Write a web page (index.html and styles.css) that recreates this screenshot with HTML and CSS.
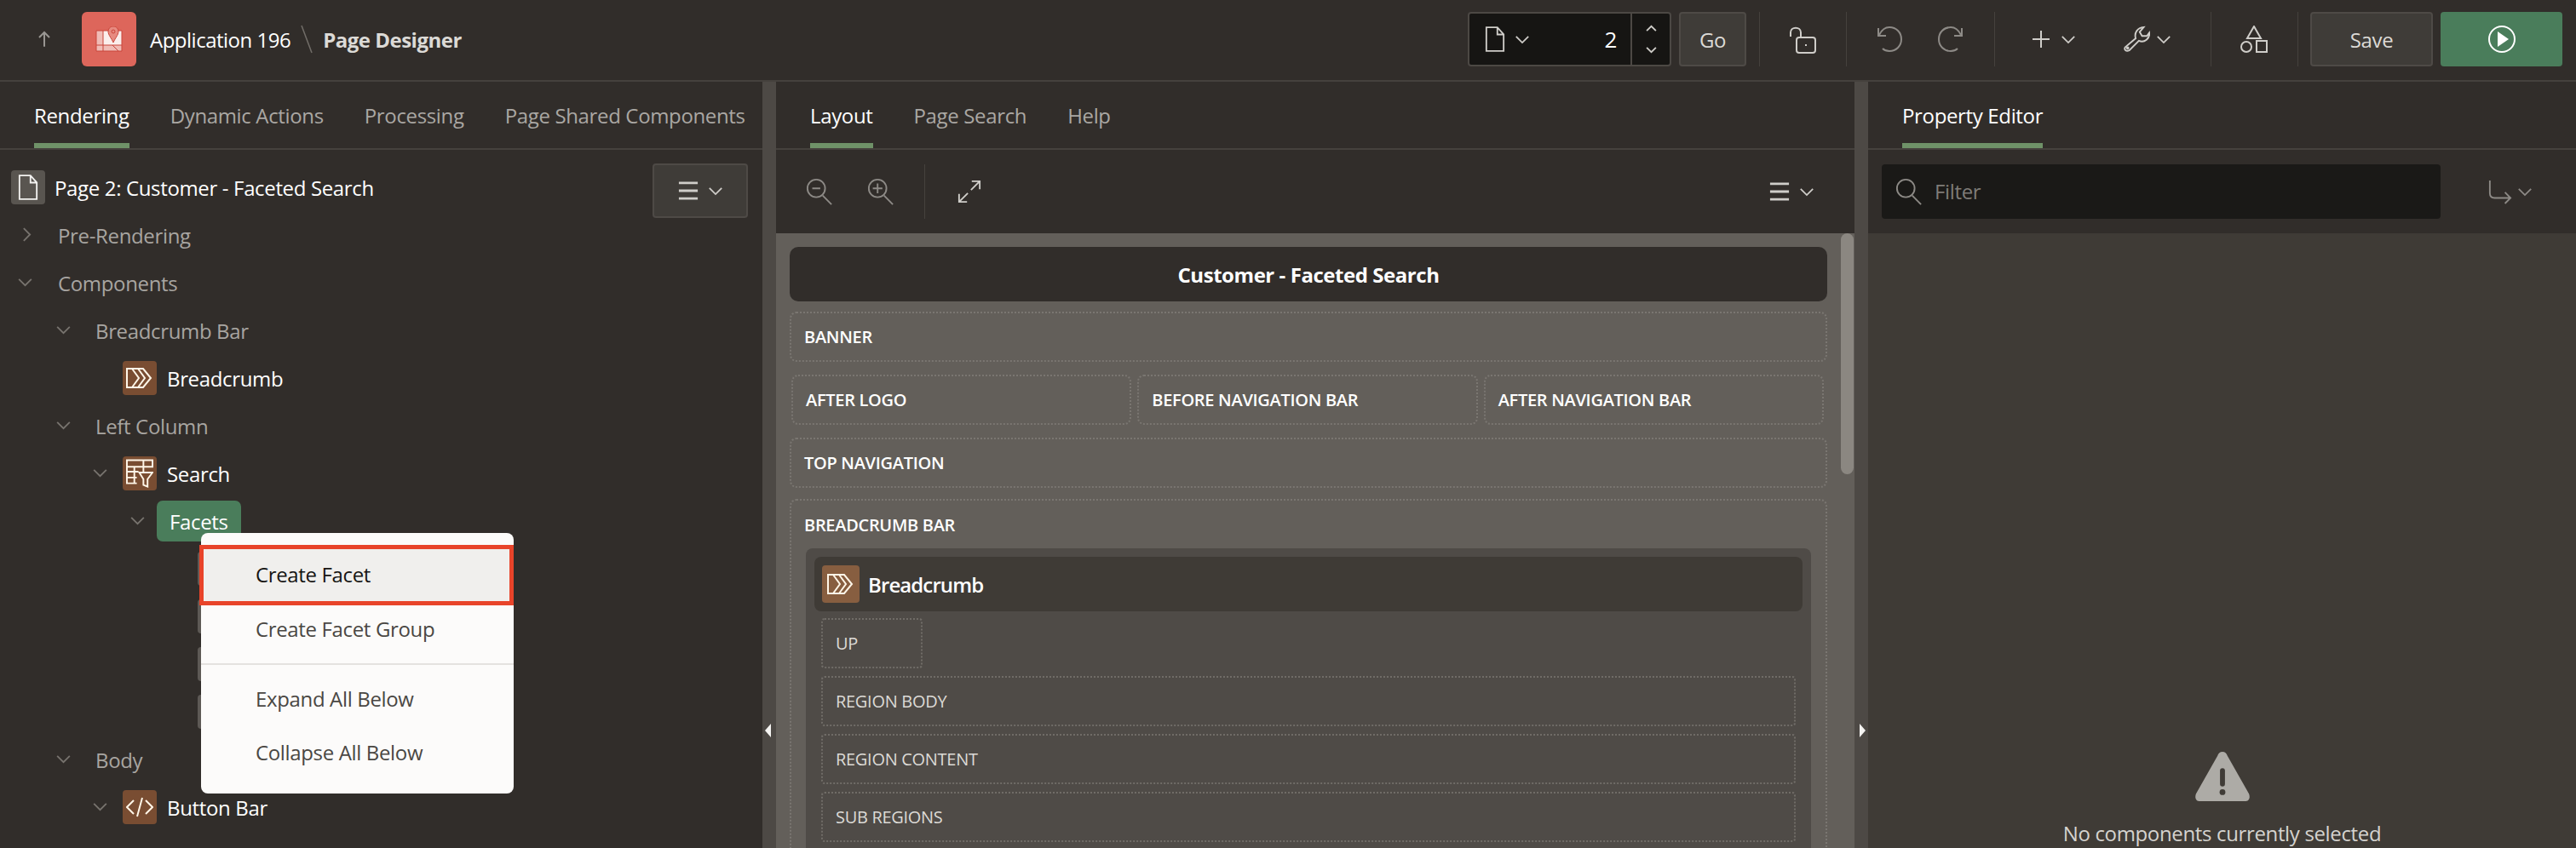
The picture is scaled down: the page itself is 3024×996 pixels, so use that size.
FILE: index.html
```html
<!DOCTYPE html>
<html lang="en">
<head>
    <meta charset="UTF-8">
    <title>Page Designer</title>
    <link rel="stylesheet" href="styles.css">
</head>
<body>
    <header class="topbar">
        <div class="brand">
            <svg class="ico up" viewBox="0 0 24 32"><path d="M12 29V4M3 13l9-9 9 9"/></svg>
            <div class="logo">
                <svg viewBox="0 0 32 30"><path class="f1" d="M1 5h8v17H1z"/><path class="f2" d="M9 5h22v17H9z"/><path class="f1" d="M1 22h30v7H1z"/><path class="ln" d="M1 5h30v24H1zM9 5v24M1 22h30M20 22l7 7"/><path class="pin" d="M21 0c4 0 6 3 6 6 0 4-4 8-6 13-2-5-6-9-6-13 0-3 2-6 6-6z"/><circle class="ln" cx="21" cy="6" r="2"/></svg>
            </div>
            <span class="app-name">Application 196</span>
            <svg class="slash" viewBox="0 0 14 34"><path d="M1 1l12 32"/></svg>
            <span class="page-name">Page Designer</span>
        </div>
        <div class="tools">
            <div class="page-picker">
                <svg class="ico page" viewBox="0 0 26 34"><path d="M2 2h14l8 9v21H2zM16 2v9h8"/></svg>
                <svg class="ico chev" viewBox="0 0 20 12"><path d="M2 2l8 8 8-8"/></svg>
                <span class="page-num">2</span>
                <div class="stepper">
                    <svg class="ico" viewBox="0 0 16 10"><path d="M2 8l6-6 6 6"/></svg>
                    <svg class="ico" viewBox="0 0 16 10"><path d="M2 2l6 6 6-6"/></svg>
                </div>
            </div>
            <button class="btn go">Go</button>
            <span class="sep sep-a"></span>
            <svg class="ico lock" viewBox="0 0 32 32"><path d="M2 12V7c0-7 12-7 12 0v6"/><rect x="9" y="13" width="22" height="18" rx="3"/><path d="M20 21v2"/></svg>
            <span class="sep sep-b"></span>
            <svg class="ico dim undo" viewBox="0 0 31 32"><path d="M2 3v9h9M3 11C6 5 11 2 15 2c8 0 14 6 14 14s-6 14-14 14c-3 0-6-1-8-3"/></svg>
            <svg class="ico dim redo" viewBox="0 0 31 32"><path d="M29 3v9h-9M28 11C25 5 20 2 16 2 8 2 2 8 2 16s6 14 14 14c3 0 6-1 8-3"/></svg>
            <span class="sep sep-c"></span>
            <svg class="ico plus" viewBox="0 0 20 20"><path d="M10 0v20M0 10h20"/></svg>
            <svg class="ico chev" viewBox="0 0 20 12"><path d="M2 2l8 8 8-8"/></svg>
            <svg class="ico wrench" viewBox="0 0 33 32"><path d="M2 26l13-11c-2-7 2-13 10-14l-5 6 3 5 6 0 3-4c1 7-6 13-13 10L7 30c-4 2-7-1-5-4z"/><circle cx="5" cy="27" r="1"/></svg>
            <svg class="ico chev" viewBox="0 0 20 12"><path d="M2 2l8 8 8-8"/></svg>
            <span class="sep sep-d"></span>
            <svg class="ico shapes" viewBox="0 0 32 32"><path d="M16 1l8 14H8zM19 18h12v13H19z"/><circle cx="7" cy="25" r="6"/></svg>
            <span class="sep sep-e"></span>
            <button class="btn save">Save</button>
            <button class="run">
                <svg viewBox="0 0 34 34"><circle cx="17" cy="17" r="15"/><path class="play" d="M12 8l13 9-13 9z"/></svg>
            </button>
        </div>
    </header>

    <main class="designer">
        <section class="panel left">
            <nav class="tabs">
                <a class="tab on">Rendering</a>
                <a class="tab">Dynamic Actions</a>
                <a class="tab">Processing</a>
                <a class="tab">Page Shared Components</a>
            </nav>
            <div class="tree-head">
                <span class="page-badge"><svg class="ico" viewBox="0 0 26 34"><path d="M2 2h14l8 9v21H2zM16 2v9h8"/></svg></span>
                <span class="tree-title">Page 2: Customer - Faceted Search</span>
                <button class="btn menu-btn">
                    <svg class="ico bars" viewBox="0 0 26 26"><path d="M1 3h24M1 13h24M1 23h24"/></svg>
                    <svg class="ico chev" viewBox="0 0 20 12"><path d="M2 2l8 8 8-8"/></svg>
                </button>
            </div>
            <ul class="tree">
                <li class="node l0"><svg class="tw side" viewBox="0 0 12 20"><path d="M2 2l8 8-8 8"/></svg><span class="muted">Pre-Rendering</span></li>
                <li class="node l0"><svg class="tw" viewBox="0 0 20 12"><path d="M2 2l8 8 8-8"/></svg><span class="muted">Components</span></li>
                <li class="node l1"><svg class="tw" viewBox="0 0 20 12"><path d="M2 2l8 8 8-8"/></svg><span class="muted">Breadcrumb Bar</span></li>
                <li class="node l2"><span class="comp"><svg viewBox="0 0 32 26"><path d="M1 2h19l9 11-9 11H1zM7 2l8 11-8 11M14 2l8 11-8 11"/></svg></span><span>Breadcrumb</span></li>
                <li class="node l1"><svg class="tw" viewBox="0 0 20 12"><path d="M2 2l8 8 8-8"/></svg><span class="muted">Left Column</span></li>
                <li class="node l2"><svg class="tw" viewBox="0 0 20 12"><path d="M2 2l8 8 8-8"/></svg><span class="comp"><svg class="tall" viewBox="0 0 33 34"><path d="M1 1h31v8H1zM1 9v20h12M1 15h14M1 22h12M10 9v20M21 1v8M21 9v6M16 16h16l-6 8v9l-5-2v-7z"/></svg></span><span>Search</span></li>
                <li class="node l3"><svg class="tw" viewBox="0 0 20 12"><path d="M2 2l8 8 8-8"/></svg><span class="pill">Facets</span></li>
                <li class="node l4"><span class="comp grey"></span></li>
                <li class="node l4"><span class="comp grey"></span></li>
                <li class="node l4"><span class="comp grey"></span></li>
                <li class="node l4"><span class="comp grey"></span></li>
                <li class="node l1"><svg class="tw" viewBox="0 0 20 12"><path d="M2 2l8 8 8-8"/></svg><span class="muted">Body</span></li>
                <li class="node l2"><svg class="tw" viewBox="0 0 20 12"><path d="M2 2l8 8 8-8"/></svg><span class="comp"><svg viewBox="0 0 32 26"><path d="M9 5l-8 8 8 8M23 5l8 8-8 8M19 2l-6 22"/></svg></span><span>Button Bar</span></li>
                <li class="node l3b"><span class="muted">Next</span></li>
            </ul>
            <div class="ctx-menu">
                <div class="ctx-item hot">Create Facet</div>
                <div class="ctx-item">Create Facet Group</div>
                <hr class="ctx-sep">
                <div class="ctx-item">Expand All Below</div>
                <div class="ctx-item">Collapse All Below</div>
            </div>
        </section>

        <div class="splitter"><span class="grip to-left"></span></div>

        <section class="panel center">
            <nav class="tabs">
                <a class="tab on">Layout</a>
                <a class="tab">Page Search</a>
                <a class="tab">Help</a>
            </nav>
            <div class="layout-tools">
                <svg class="ico dim lens" viewBox="0 0 34 34"><circle cx="13" cy="13" r="11"/><path d="M21 22l11 11M8 13h10"/></svg>
                <svg class="ico dim lens" viewBox="0 0 34 34"><circle cx="13" cy="13" r="11"/><path d="M21 22l11 11M7 13h12M13 7v12"/></svg>
                <span class="sep"></span>
                <svg class="ico grow" viewBox="0 0 30 30"><path d="M18 2h10v10M28 2L17 13M12 28H2V18M2 28l11-11"/></svg>
                <button class="layout-menu">
                    <svg class="ico bars" viewBox="0 0 26 26"><path d="M1 3h24M1 13h24M1 23h24"/></svg>
                    <svg class="ico chev" viewBox="0 0 20 12"><path d="M2 2l8 8 8-8"/></svg>
                </button>
            </div>
            <div class="canvas">
                <div class="canvas-inner">
                    <div class="page-title">Customer - Faceted Search</div>
                    <div class="slot">BANNER</div>
                    <div class="slot-row">
                        <div class="slot">AFTER LOGO</div>
                        <div class="slot">BEFORE NAVIGATION BAR</div>
                        <div class="slot">AFTER NAVIGATION BAR</div>
                    </div>
                    <div class="slot">TOP NAVIGATION</div>
                    <div class="slot tall">
                        <div class="slot-label">BREADCRUMB BAR</div>
                        <div class="region">
                            <div class="region-head">
                                <span class="comp big"><svg viewBox="0 0 32 26"><path d="M1 2h19l9 11-9 11H1zM7 2l8 11-8 11M14 2l8 11-8 11"/></svg></span>
                                <span>Breadcrumb</span>
                            </div>
                            <div class="sub short">UP</div>
                            <div class="sub">REGION BODY</div>
                            <div class="sub">REGION CONTENT</div>
                            <div class="sub">SUB REGIONS</div>
                        </div>
                    </div>
                </div>
                <span class="scroll-thumb"></span>
            </div>
        </section>

        <div class="splitter"><span class="grip to-right"></span></div>

        <section class="panel right">
            <nav class="tabs">
                <a class="tab on">Property Editor</a>
            </nav>
            <div class="filter-bar">
                <div class="filter">
                    <svg class="ico dim" viewBox="0 0 34 34"><circle cx="13" cy="13" r="11"/><path d="M21 22l11 11"/></svg>
                    <span class="filter-text">Filter</span>
                </div>
                <svg class="ico dim go-to" viewBox="0 0 30 30"><path d="M2 1v16c0 4 2 6 6 6h20M21 16l7 7-7 7"/></svg>
                <svg class="ico dim chev" viewBox="0 0 20 12"><path d="M2 2l8 8 8-8"/></svg>
            </div>
            <div class="prop-body">
                <svg class="warn" viewBox="0 0 66 60"><path d="M33 0c3 0 5 2 6 5l26 46c2 5 0 9-5 9H6c-5 0-7-4-5-9L27 5c1-3 3-5 6-5z"/><rect class="cut" x="30" y="20" width="6" height="22" rx="3"/><circle class="cut" cx="33" cy="49" r="3.500"/></svg>
                <p>No components currently selected</p>
            </div>
        </section>
    </main>
</body>
</html>
```

FILE: styles.css
```css
* {
    box-sizing: border-box;
}
html, body {
    height: 100%;
}
body {
    margin: 0;
    height: 996px;
    overflow: hidden;
    background: #312d2a;
    color: #fff;
    font-family: "Open Sans", "Noto Sans", sans-serif;
    font-size: 24px;
    letter-spacing: -0.35px;
    display: flex;
    flex-direction: column;
}
button {
    font-family: inherit;
    letter-spacing: inherit;
}
.ico {
    fill: none;
    stroke: #cfcdc9;
    stroke-width: 2;
    flex: none;
}
.ico.dim {
    stroke: #8d8a86;
}
.chev {
    width: 18px;
    height: 11px;
}

/* top bar */
.topbar {
    height: 96px;
    flex: none;
    display: flex;
    justify-content: space-between;
    align-items: flex-start;
    padding-top: 14px;
    background: #312d2a;
    border-bottom: 2px solid #45413d;
}
.brand {
    display: flex;
    align-items: center;
    height: 64px;
    padding-left: 44px;
}
.up {
    width: 16px;
    height: 24px;
    stroke: #999692;
    stroke-width: 3;
}
.logo {
    width: 64px;
    height: 64px;
    margin-left: 36px;
    border-radius: 6px;
    background: #dd665b;
    display: flex;
    align-items: center;
    justify-content: center;
}
.logo svg {
    width: 32px;
    height: 30px;
}
.logo .f1 {
    fill: #f0bcb6;
}
.logo .f2 {
    fill: #fbeeec;
}
.logo .ln {
    fill: none;
    stroke: #c9453a;
    stroke-width: 1;
}
.logo .pin {
    fill: #e78a80;
    stroke: #c9453a;
}
.app-name {
    margin-left: 16px;
    letter-spacing: -0.5px;
}
.slash {
    width: 14px;
    height: 34px;
    margin: 0 12px;
    fill: none;
    stroke: #716d68;
    stroke-width: 1.500;
}
.page-name {
    color: #dcdad6;
    font-weight: 700;
    letter-spacing: -0.5px;
}
.tools {
    display: flex;
    align-items: center;
    height: 64px;
    padding-right: 16px;
}
.page-picker {
    width: 239px;
    height: 64px;
    display: flex;
    align-items: center;
    background: #161513;
    border: 2px solid #4c4844;
    border-radius: 4px;
    padding-left: 18px;
}
.page-picker .page {
    width: 24px;
    height: 32px;
}
.page-picker .chev {
    margin-left: 11px;
}
.page-num {
    margin-left: auto;
    margin-right: 16px;
    font-size: 26px;
}
.stepper {
    width: 46px;
    height: 100%;
    border-left: 2px solid #4c4844;
    display: flex;
    flex-direction: column;
    align-items: center;
    justify-content: space-between;
    padding: 13px 0;
}
.stepper .ico {
    width: 15px;
    height: 9px;
}
.btn {
    height: 64px;
    background: #3f3c38;
    border: 2px solid #4e4a46;
    border-radius: 4px;
    color: #dcdad6;
    font-size: 24px;
    padding: 0;
}
.go {
    width: 79px;
    margin-left: 9px;
}
.sep {
    width: 1px;
    height: 64px;
    background: #45413d;
    flex: none;
}
.sep-a {
    margin-left: 15px;
}
.lock {
    width: 32px;
    height: 32px;
    margin-left: 34px;
    margin-top: 2px;
}
.sep-b {
    margin-left: 35px;
}
.undo {
    width: 31px;
    height: 32px;
    margin-left: 35px;
}
.redo {
    width: 31px;
    height: 32px;
    margin-left: 40px;
}
.sep-c {
    margin-left: 36px;
}
.plus {
    width: 20px;
    height: 20px;
    margin-left: 44px;
}
.plus + .chev {
    margin-left: 13px;
}
.wrench {
    width: 31px;
    height: 32px;
    margin-left: 56px;
}
.wrench + .chev {
    margin-left: 7px;
}
.sep-d {
    margin-left: 46px;
}
.shapes {
    width: 32px;
    height: 32px;
    margin-left: 34px;
}
.sep-e {
    margin-left: 35px;
}
.save {
    width: 144px;
    margin-left: 14px;
}
.run {
    width: 143px;
    height: 64px;
    margin-left: 9px;
    padding: 0;
    border: none;
    border-radius: 4px;
    background: #4a7d5b;
    display: flex;
    align-items: center;
    justify-content: center;
}
.run svg {
    width: 34px;
    height: 34px;
    fill: none;
    stroke: #fff;
    stroke-width: 2;
}
.run .play {
    fill: #fff;
    stroke: none;
}

/* panels */
.designer {
    flex: 1;
    min-height: 0;
    display: flex;
}
.panel {
    position: relative;
    display: flex;
    flex-direction: column;
    overflow: hidden;
}
.left {
    width: 895px;
    background: #312d2a;
}
.center {
    width: 1266px;
    background: #312d2a;
}
.right {
    flex: 1;
    background: #312d2a;
}
.splitter {
    position: relative;
    width: 16px;
    flex: none;
    background: #4d4945;
}
.grip {
    position: absolute;
    top: 754px;
    width: 0;
    height: 0;
    left: 3px;
    border-top: 8px solid transparent;
    border-bottom: 8px solid transparent;
}
.to-left {
    border-right: 7px solid #f5f4f2;
}
.to-right {
    left: 6px;
    border-left: 7px solid #f5f4f2;
}
.tabs {
    height: 80px;
    flex: none;
    display: flex;
    gap: 48px;
    padding-left: 40px;
    border-bottom: 2px solid #45413d;
}
.tab {
    height: 78px;
    padding-top: 23px;
    color: #aaa7a3;
    white-space: nowrap;
}
.tab.on {
    color: #fff;
    border-bottom: 6px solid #6f9268;
}

/* rendering tree */
.tree-head {
    height: 72px;
    flex: none;
    display: flex;
    align-items: center;
    padding: 16px 17px 0 13px;
}
.page-badge {
    width: 40px;
    height: 40px;
    border-radius: 4px;
    background: #595550;
    display: flex;
    align-items: center;
    justify-content: center;
}
.page-badge .ico {
    width: 24px;
    height: 34px;
    stroke: #f3f2f0;
}
.tree-title {
    margin-left: 11px;
}
.menu-btn {
    margin-left: auto;
    margin-top: 8px;
    width: 112px;
    flex: none;
    display: flex;
    align-items: center;
    justify-content: center;
    gap: 11px;
}
.bars {
    width: 24px;
    height: 24px;
    stroke-width: 3;
}
.tree {
    list-style: none;
    margin: 0;
    padding: 0;
}
.node {
    position: relative;
    height: 56px;
    display: flex;
    align-items: center;
}
.node .tw {
    position: absolute;
    top: 22px;
    width: 19px;
    height: 11px;
    fill: none;
    stroke: #77736e;
    stroke-width: 2;
}
.node .tw.side {
    top: 18px;
    left: 26px;
    width: 11px;
    height: 19px;
}
.muted {
    color: #a8a5a1;
}
.l0 {
    padding-left: 68px;
}
.l0 .tw {
    left: 20px;
}
.l1 {
    padding-left: 112px;
}
.l1 .tw {
    left: 65px;
}
.l2 {
    padding-left: 144px;
}
.l2 .tw {
    left: 108px;
}
.l3 {
    padding-left: 184px;
}
.l3 .tw {
    left: 152px;
}
.l4 {
    padding-left: 232px;
}
.l3b {
    padding-left: 197px;
}
.comp {
    width: 40px;
    height: 40px;
    margin-right: 12px;
    border-radius: 4px;
    background: #794d32;
    display: flex;
    align-items: center;
    justify-content: center;
    flex: none;
}
.comp svg {
    width: 32px;
    height: 26px;
    fill: none;
    stroke: #fff6e8;
    stroke-width: 2;
}
.comp svg.tall {
    height: 34px;
}
.comp.grey {
    background: #5d5955;
}
.pill {
    height: 48px;
    padding: 0 15px;
    display: flex;
    align-items: center;
    border-radius: 7px;
    background: #4a7d5b;
}

/* context menu */
.ctx-menu {
    position: absolute;
    left: 236px;
    top: 530px;
    width: 367px;
    height: 306px;
    padding-top: 14px;
    background: #fcfbfa;
    border-radius: 8px;
    color: #4a4743;
}
.ctx-item {
    height: 63px;
    padding-left: 64px;
    display: flex;
    align-items: center;
}
.ctx-item.hot {
    height: 71px;
    margin: 0 0 -4px -2px;
    padding-left: 61px;
    padding-bottom: 2px;
    background: #f0efed;
    border: 5px solid #e8442a;
    color: #161513;
}
.ctx-sep {
    margin: 9px 0 8px;
    border: none;
    border-top: 2px solid #e4e2df;
}

/* layout canvas */
.layout-tools {
    height: 98px;
    flex: none;
    display: flex;
    align-items: center;
    padding: 0 47px 0 35px;
}
.lens {
    width: 32px;
    height: 32px;
    margin-right: 40px;
}
.layout-tools .lens + .lens {
    margin-right: 35px;
}
.layout-tools .sep {
    margin-right: 38px;
}
.grow {
    width: 28px;
    height: 28px;
}
.layout-menu {
    margin-left: auto;
    background: none;
    border: none;
    padding: 0;
    display: flex;
    align-items: center;
    gap: 11px;
}
.canvas {
    position: relative;
    flex: 1;
    min-height: 0;
    overflow: hidden;
    background: #635f5a;
}
.canvas-inner {
    width: 1250px;
    padding: 16px 16px 0;
    display: flex;
    flex-direction: column;
    gap: 15px;
    font-size: 20px;
    font-weight: 600;
    letter-spacing: -0.3px;
}
.page-title {
    height: 64px;
    margin-bottom: -3px;
    border-radius: 10px;
    background: #312d2a;
    display: flex;
    align-items: center;
    justify-content: center;
    font-size: 24px;
    font-weight: 700;
    letter-spacing: -0.45px;
}
.slot {
    flex: none;
    height: 59px;
    display: flex;
    align-items: center;
    padding-left: 15px;
    border: 2px dotted #7a7671;
    border-radius: 8px;
}
.slot-row {
    display: grid;
    grid-template-columns: repeat(3, 1fr);
    gap: 7px;
    padding: 0 4px 0 2px;
}
.slot.tall {
    height: auto;
    display: block;
    margin-top: -2px;
    padding: 0 17px;
}
.slot-label {
    height: 56px;
    display: flex;
    align-items: center;
    margin-left: -2px;
}
.region {
    padding: 10px 10px 12px;
    margin-bottom: 10px;
    background: #4f4b47;
    border-radius: 8px 8px 0 0;
    display: flex;
    flex-direction: column;
    gap: 9px;
    font-weight: 400;
    color: #dcdad6;
}
.region-head {
    height: 64px;
    margin-bottom: -1px;
    display: flex;
    align-items: center;
    padding-left: 9px;
    border-radius: 8px;
    background: #3f3b36;
    color: #fff;
    font-size: 24px;
    font-weight: 600;
    letter-spacing: -0.9px;
}
.comp.big {
    width: 44px;
    height: 44px;
    margin-right: 10px;
    background: #875e40;
}
.sub {
    height: 59px;
    margin: 0 8px;
    display: flex;
    align-items: center;
    padding-left: 15px;
    border: 2px dotted #706c67;
    border-radius: 4px;
}
.sub.short {
    width: 119px;
}
.scroll-thumb {
    position: absolute;
    top: 0;
    right: 1px;
    width: 15px;
    height: 283px;
    border-radius: 8px;
    background: #8b8781;
}

/* property editor */
.filter-bar {
    height: 98px;
    flex: none;
    display: flex;
    align-items: center;
    padding-left: 16px;
}
.filter {
    width: 656px;
    height: 64px;
    display: flex;
    align-items: center;
    gap: 14px;
    padding-left: 16px;
    border-radius: 4px;
    background: #1a1917;
    color: #7f7c78;
}
.filter .ico {
    width: 32px;
    height: 32px;
}
.filter-text {
    margin-top: -2px;
}
.go-to {
    width: 28px;
    height: 30px;
    margin-left: 56px;
}
.filter-bar .chev {
    margin-left: 6px;
}
.prop-body {
    flex: 1;
    background: #3f3b36;
    display: flex;
    flex-direction: column;
    align-items: center;
    padding-top: 608px;
    color: #d5d3cf;
}
.warn {
    width: 64px;
    height: 60px;
    flex: none;
    fill: #adaba6;
}
.warn .cut {
    fill: #3f3b36;
}
.prop-body p {
    margin: 20px 0 0;
    white-space: nowrap;
}
```
